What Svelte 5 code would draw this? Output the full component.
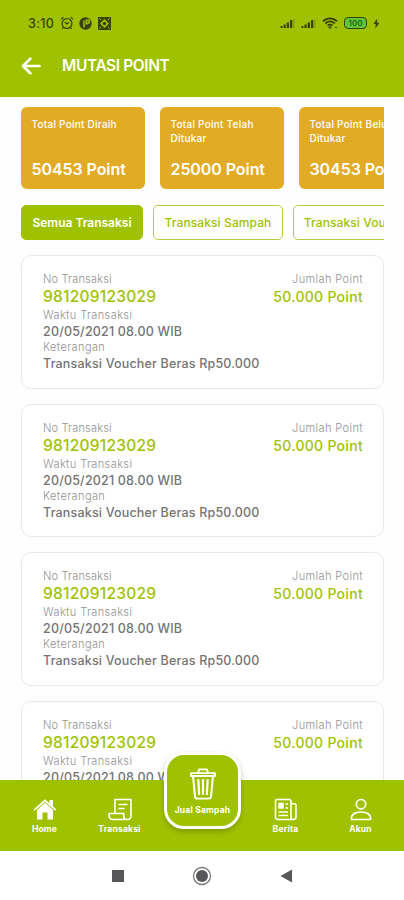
<script lang="ts">
  interface Summary {
    label: string;
    value: string;
  }

  interface Transaction {
    number: string;
    time: string;
    note: string;
    point: string;
  }

  const summaries: Summary[] = [
    { label: 'Total Point Diraih', value: '50453 Point' },
    { label: 'Total Point Telah Ditukar', value: '25000 Point' },
    { label: 'Total Point Belum Ditukar', value: '30453 Point' },
  ];

  const filters = ['Semua Transaksi', 'Transaksi Sampah', 'Transaksi Voucher'];
  let activeFilter = $state(filters[0]);

  const transactions: Transaction[] = Array.from({ length: 4 }, () => ({
    number: '981209123029',
    time: '20/05/2021 08.00 WIB',
    note: 'Transaksi Voucher Beras Rp50.000',
    point: '50.000 Point',
  }));
</script>

{#snippet signal()}
  <svg class="signal" width="15" height="11" viewBox="0 0 15 11">
    <path d="M.5 8h2v2h-2zM3.500 6.500h2.200V10H3.500zM6.700 4.500H9V10H6.700zM10 2h2.300v8H10z" fill="currentColor" />
    <path d="M13.300 1h1.200v9h-1.200z" fill="currentColor" opacity=".3" />
  </svg>
{/snippet}

<div class="screen">
  <header>
    <div class="status">
      <span class="clock">3:10</span>
      <svg class="alarm" width="14" height="14" viewBox="0 0 14 14" fill="none" stroke="currentColor" stroke-width="1.200">
        <circle cx="7" cy="7.500" r="4.900" />
        <path d="M1 3.200 3.500 1.200M13 3.200 10.500 1.200M4.800 6 7 8 9.300 6.500M3.300 11.500l-1 1.300M10.700 11.500l1 1.300" />
      </svg>
      <svg class="disc" width="13" height="13" viewBox="0 0 13 13">
        <circle cx="6.500" cy="6.500" r="6.200" fill="currentColor" />
        <path d="M5 10.500V3.500M7.300 7.500V3.200h2.900v2.300L7.500 7" fill="none" stroke="#9fc200" stroke-width="1.500" />
      </svg>
      <svg class="tile" width="13" height="13" viewBox="0 0 13 13">
        <path d="M0 0h13v13H0z" fill="currentColor" />
        <path d="M6.500 2 11 6.500 6.500 11 2 6.500z" fill="#9fc200" />
        <path d="M1.300 1.300 3 3M11.700 1.300 10 3M1.300 11.700 3 10M11.700 11.700 10 10" stroke="#9fc200" />
        <circle cx="6.500" cy="6.500" r="1.800" fill="currentColor" />
      </svg>
      <div class="status-right">
        {@render signal()}
        {@render signal()}
        <svg class="wifi" width="16" height="13" viewBox="0 0 16 13" fill="none" stroke="currentColor" stroke-width="1.700">
          <path d="M1 4.300C5 .3 11 .3 15 4.300M3.200 6.500c3-2.700 6.600-2.700 9.600 0M5.500 8.600c1.600-1.300 3.400-1.300 5 0" />
          <path d="M6.700 10 8 11.500 9.300 10zM13 10.500h2" stroke-width="1" fill="currentColor" />
        </svg>
        <span class="battery">100</span>
        <svg class="bolt" width="7" height="11" viewBox="0 0 7 11"><path d="M4.200.5.5 6h2.300L2.200 10.500 6.500 4.800H4z" fill="currentColor" /></svg>
      </div>
    </div>
    <div class="title-bar">
      <button class="back" aria-label="Kembali">
        <svg width="20" height="18" viewBox="0 0 20 18" fill="none" stroke="currentColor" stroke-width="2.700" stroke-linecap="round" stroke-linejoin="round"><path d="M9.300 1.800 2 9l7.300 7.200M2.200 9h16.300" /></svg>
      </button>
      <h1>MUTASI POINT</h1>
    </div>
  </header>

  <main>
    <section class="summaries">
      {#each summaries as item}
        <article class="summary">
          <p>{item.label}</p>
          <strong>{item.value}</strong>
        </article>
      {/each}
    </section>

    <div class="filters">
      {#each filters as filter}
        <button class="filter" class:active={filter === activeFilter} onclick={() => (activeFilter = filter)}>{filter}</button>
      {/each}
    </div>

    <section class="list">
      {#each transactions as trx}
        <article class="trx">
          <div class="detail">
            <span class="label">No Transaksi</span>
            <span class="number">{trx.number}</span>
            <span class="label wide">Waktu Transaksi</span>
            <span class="text">{trx.time}</span>
            <span class="label wide">Keterangan</span>
            <span class="text">{trx.note}</span>
          </div>
          <div class="amount">
            <span class="label wide">Jumlah Point</span>
            <span class="point">{trx.point}</span>
          </div>
        </article>
      {/each}
    </section>
  </main>

  <nav>
    <a href="#home" class="tab">
      <svg width="24" height="23" viewBox="0 0 24 23" fill="currentColor">
        <path d="M12 4.800 20 12v9.500h-5.500v-7h-5v7H4V12z" />
        <path d="M1.200 12.200 12 2.500l10.800 9.700" fill="none" stroke="currentColor" stroke-width="1.700" />
        <path d="M16.500 2H20v6.500l-3.500-3z" />
      </svg>
      <span>Home</span>
    </a>
    <a href="#transaksi" class="tab">
      <svg width="24" height="23" viewBox="0 0 24 23" fill="none" stroke="currentColor" stroke-width="1.600" stroke-linejoin="round">
        <path d="M7 15V1.500h16V18a3.500 3.500 0 0 1-3.500 3.500H4.500A3.300 3.300 0 0 1 1.200 18v-2.500h14.500V18c0 2 1.500 3.500 3.500 3.500" />
        <path d="M10.500 6.500h9M10.500 10.500h6" />
      </svg>
      <span>Transaksi</span>
    </a>
    <div class="slot">
      <a href="#jual" class="sell">
        <svg width="26" height="32" viewBox="0 0 26 34" preserveAspectRatio="none" fill="none" stroke="currentColor" stroke-width="2" stroke-linejoin="round">
          <path d="M1 5.500h24v3H1zM8 5.500l1-4h8l1 4M3 8.500l2 22a2.500 2.500 0 0 0 2.500 2h11a2.500 2.500 0 0 0 2.500-2l2-22" />
          <path d="M8.300 12l.9 16.500M13 12v16.500M17.700 12l-.9 16.500" stroke-width="2.200" />
        </svg>
        <span>Jual Sampah</span>
      </a>
    </div>
    <a href="#berita" class="tab">
      <svg width="24" height="23" viewBox="0 0 24 23" fill="none" stroke="currentColor" stroke-width="1.600" stroke-linejoin="round">
        <path d="M20 21.500H4A2.500 2.500 0 0 1 1.500 19V3A1.700 1.700 0 0 1 3.200 1.500h12A1.700 1.700 0 0 1 17 3.200V19a2.500 2.500 0 0 0 5 0V7.500a1.700 1.700 0 0 0-1.700-1.700H17" />
        <path d="M4.500 14h9.500M4.500 17.500h9.500M11.500 6H14M11.500 10H14" />
        <path d="M5 5.500h4v4.500H5z" fill="currentColor" />
      </svg>
      <span>Berita</span>
    </a>
    <a href="#akun" class="tab">
      <svg width="24" height="23" viewBox="0 0 24 23" fill="none" stroke="currentColor" stroke-width="1.700" stroke-linejoin="round">
        <circle cx="12" cy="6.200" r="4.700" />
        <path d="M2.500 21.500C2 16 6 14 12 14s10 2 9.500 7.500z" />
      </svg>
      <span>Akun</span>
    </a>
  </nav>

  <div class="system">
    <svg width="12" height="12" viewBox="0 0 12 12"><path d="M0 0h12v12H0z" fill="#58585a" /></svg>
    <svg width="20" height="20" viewBox="0 0 20 20"><circle cx="10" cy="10" r="8.500" fill="none" stroke="#777" stroke-width="1.300" /><circle cx="10" cy="10" r="6" fill="#58585a" /></svg>
    <svg width="12" height="14" viewBox="0 0 12 14"><path d="M12 .5v13L.5 7z" fill="#58585a" /></svg>
  </div>
</div>

<style>
  :global(body) {
    background: #fff;
  }
  .screen {
    --green: #9fc200;
    display: flex;
    flex-direction: column;
    width: 404px;
    height: 900px;
    overflow: hidden;
    background: #fefefe;
    font-family: Inter, "Liberation Sans", sans-serif;
  }
  button {
    padding: 0;
    border: 0;
    background: none;
    font-family: inherit;
    cursor: pointer;
  }
  a {
    color: inherit;
    text-decoration: none;
  }

  header {
    flex: none;
    height: 96.5px;
    background: var(--green);
    box-sizing: border-box;
    padding-top: 14px;
  }
  .status {
    display: flex;
    align-items: center;
    height: 18px;
    padding: 0 24px 0 28px;
    color: #38420c;
  }
  .clock {
    width: 32px;
    font-size: 12.5px;
    font-weight: 500;
    letter-spacing: 0.3px;
  }
  .disc { margin-left: 5px; }
  .tile { margin-left: 6px; }
  .status-right {
    display: flex;
    align-items: center;
    margin-left: auto;
  }
  .signal { margin-right: 6px; }
  .wifi { margin-right: 6px; }
  .battery {
    width: 21px;
    height: 10px;
    margin-right: 6px;
    border: 1.5px solid #38420c;
    border-radius: 4px;
    background: #62c43a;
    color: #176b12;
    font-size: 8px;
    font-weight: 600;
    line-height: 10px;
    text-align: center;
  }
  .title-bar {
    display: flex;
    align-items: center;
    height: 67px;
    padding-left: 21px;
    color: #fff;
  }
  .back {
    display: flex;
    width: 41px;
    color: inherit;
  }
  h1 {
    margin: 0;
    font-size: 15.5px;
    font-weight: 600;
    letter-spacing: -0.4px;
  }

  main {
    flex: 1;
    min-height: 0;
    overflow: hidden;
    padding: 10.5px 20px 0 21px;
  }
  .summaries {
    display: flex;
    gap: 15px;
    overflow: hidden;
  }
  .summary {
    display: flex;
    flex: none;
    flex-direction: column;
    justify-content: space-between;
    box-sizing: border-box;
    width: 124px;
    height: 82px;
    padding: 10px 16px 10px 10.5px;
    border-radius: 6px;
    background: #e2ab26;
    color: #fff;
  }
  .summary p {
    margin: 0;
    font-size: 10px;
    font-weight: 500;
    letter-spacing: 0.25px;
    line-height: 14px;
  }
  .summary strong {
    font-size: 16px;
    font-weight: 600;
    letter-spacing: -0.08px;
    line-height: 20px;
    white-space: nowrap;
  }
  .filters {
    display: flex;
    gap: 10px;
    margin-top: 16px;
    overflow: hidden;
  }
  .filter {
    flex: none;
    box-sizing: border-box;
    width: 130px;
    height: 35px;
    border: 1px solid #b4cf3c;
    border-radius: 5px;
    color: var(--green);
    font-size: 12px;
    font-weight: 500;
    letter-spacing: 0.1px;
    white-space: nowrap;
  }
  .filter:first-child { width: 122px; }
  .filter.active {
    border-color: var(--green);
    background: var(--green);
    color: #fff;
    font-weight: 600;
    letter-spacing: 0;
  }

  .list {
    display: flex;
    flex-direction: column;
    gap: 15px;
    margin-top: 15px;
  }
  .trx {
    display: flex;
    flex: none;
    justify-content: space-between;
    box-sizing: border-box;
    height: 133.6px;
    padding: 15px 20px 0 21px;
    border: 1px solid #e9e9e9;
    border-radius: 10px;
    background: #fff;
  }
  .detail,
  .amount {
    display: flex;
    flex-direction: column;
    white-space: nowrap;
  }
  .amount { align-items: flex-end; }
  .label {
    color: #929292;
    font-size: 11px;
    font-weight: 300;
    letter-spacing: 0.18px;
    line-height: 16px;
  }
  .label.wide { letter-spacing: 0.4px; }
  .number {
    color: var(--green);
    font-size: 15.5px;
    font-weight: 500;
    letter-spacing: 0.25px;
    line-height: 20px;
  }
  .text {
    padding-top: 1px;
    color: #747474;
    font-size: 12.5px;
    font-weight: 500;
    letter-spacing: 0.18px;
    line-height: 15px;
  }
  .point {
    padding-top: 1px;
    color: var(--green);
    font-size: 14px;
    font-weight: 500;
    letter-spacing: 0.3px;
    line-height: 17px;
  }

  nav {
    display: grid;
    flex: none;
    grid-template-columns: 75px 75px 91px 75px 75px;
    height: 71px;
    padding: 0 6px 0 7px;
    background: var(--green);
    color: #fff;
  }
  .tab {
    display: flex;
    flex-direction: column;
    align-items: center;
    padding-top: 18px;
    font-size: 8.5px;
    font-weight: 700;
    letter-spacing: 0.2px;
    line-height: 12px;
  }
  .tab span { margin-top: 2px; }
  .slot { position: relative; }
  .sell {
    position: absolute;
    top: -28px;
    left: 7px;
    display: flex;
    flex-direction: column;
    align-items: center;
    box-sizing: border-box;
    width: 77px;
    height: 77px;
    padding-top: 12.5px;
    border: 3px solid #fff;
    border-radius: 20px;
    background: var(--green);
    box-shadow: 0 3px 5px rgba(50, 70, 0, 0.3);
    font-size: 8.5px;
    font-weight: 700;
    letter-spacing: 0.2px;
    line-height: 12px;
    white-space: nowrap;
  }
  .sell span { margin-top: 4px; }
  .system {
    display: flex;
    flex: none;
    align-items: center;
    justify-content: center;
    gap: 68px;
    height: 49px;
    background: #fff;
  }
</style>
